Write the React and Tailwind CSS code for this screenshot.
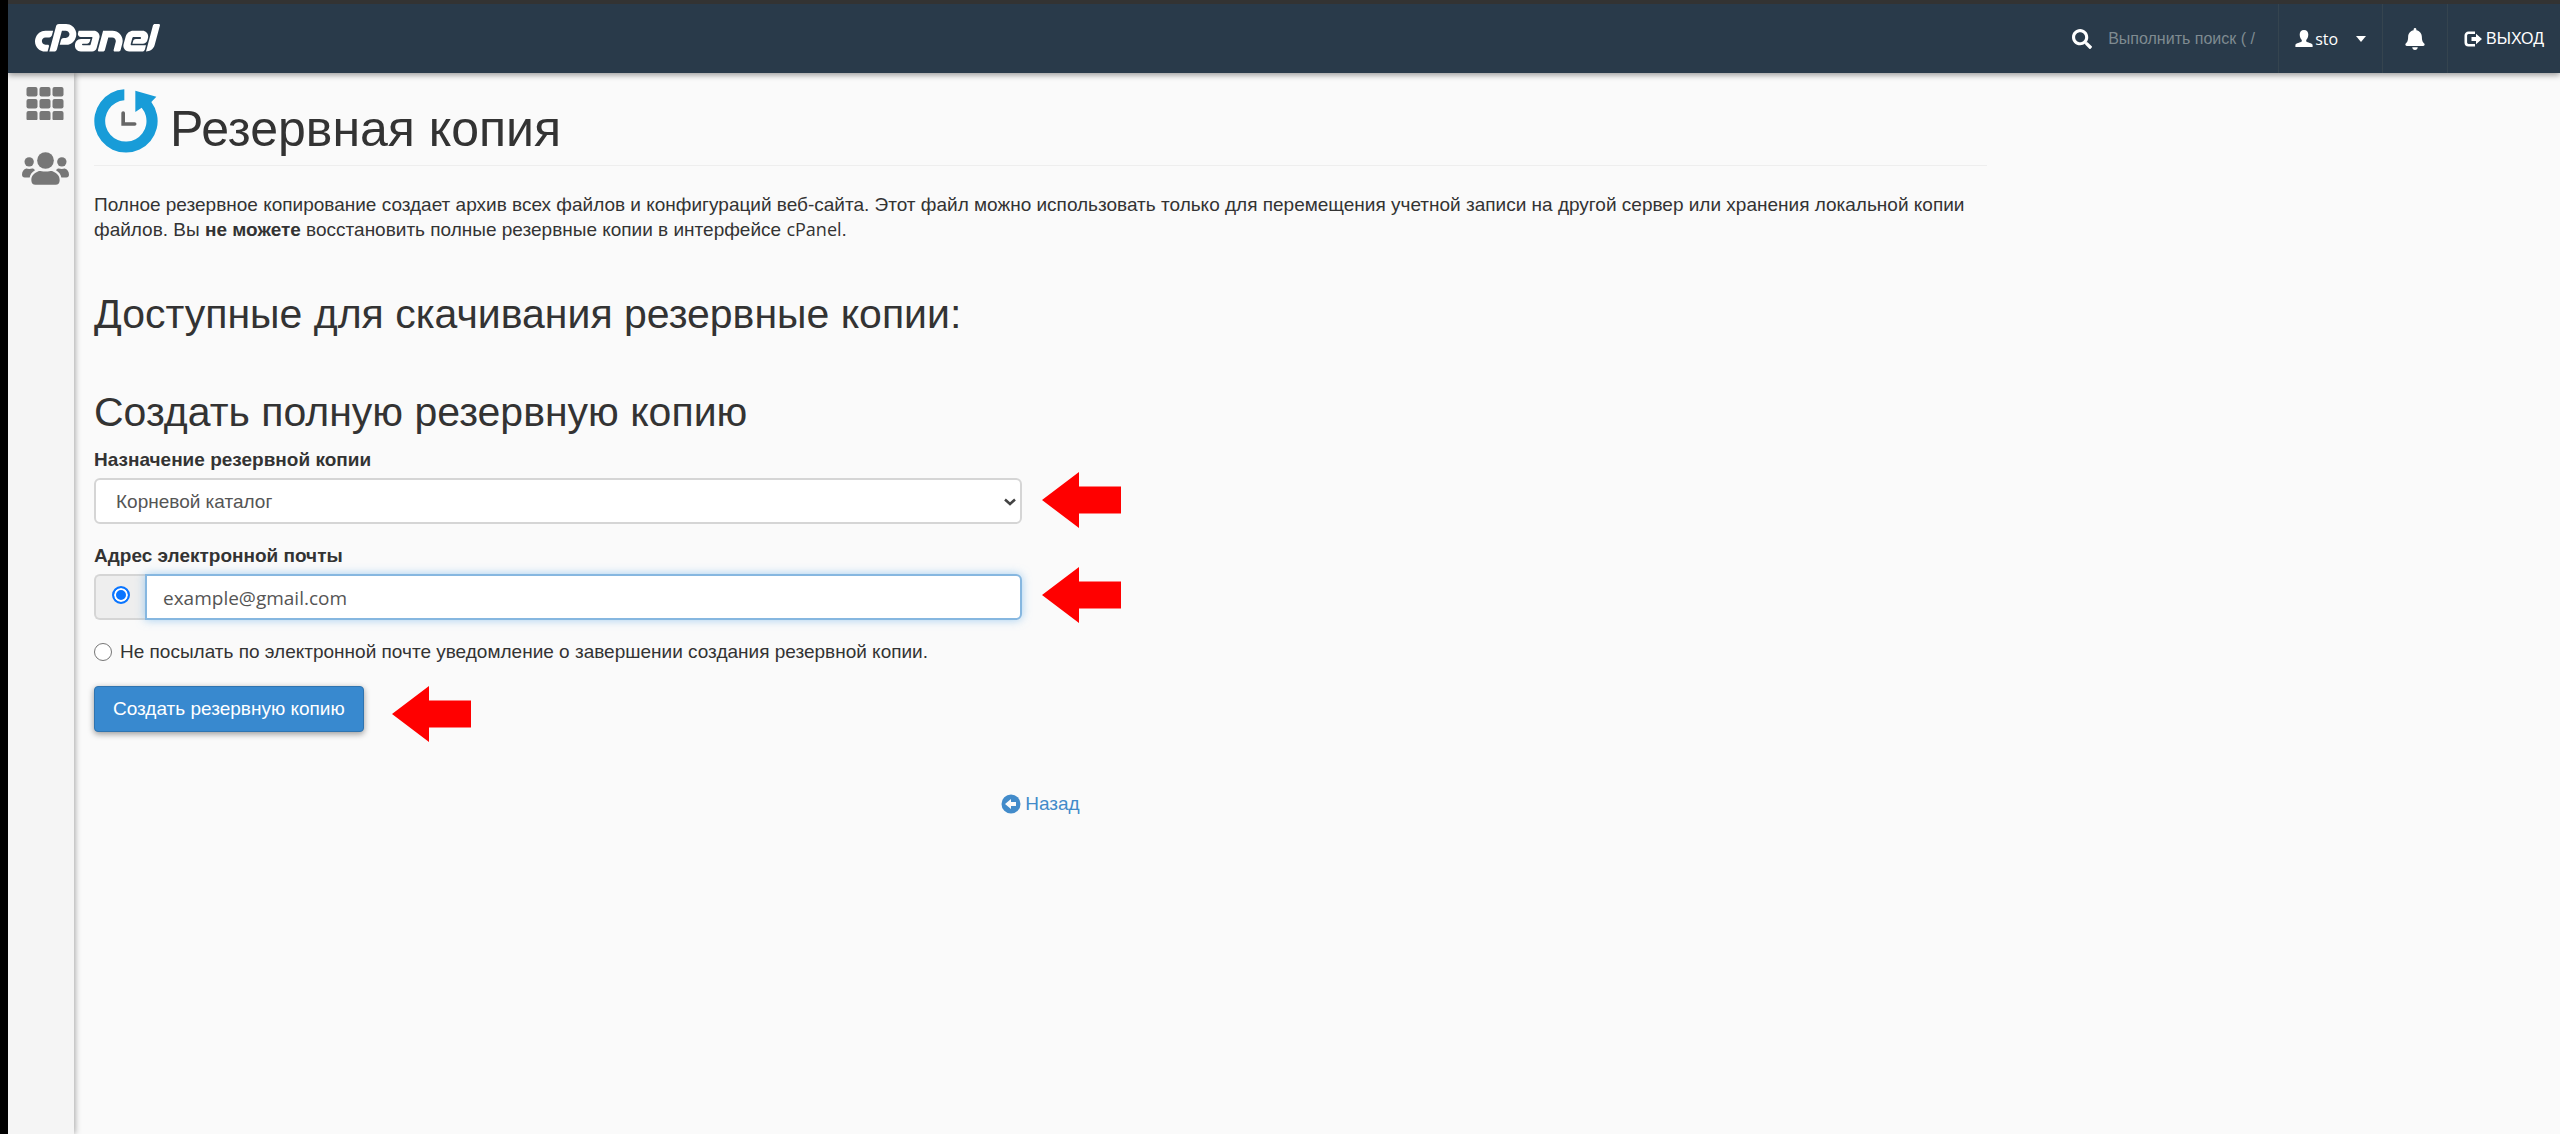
import { FaCpanel, FaSearch, FaBell } from "react-icons/fa";

function GridIcon() {
  const cells = [0, 13, 26];
  return (
    <svg viewBox="0 0 37 33" className="h-[33px] w-[38px]" fill="currentColor" aria-hidden="true">
      {cells.map((x) =>
        [0, 12, 24].map((y) => <rect key={`${x}-${y}`} x={x} y={y} width="11" height="9.5" rx="2" />)
      )}
    </svg>
  );
}

function UsersIcon() {
  return (
    <svg viewBox="0 0 141 98" className="h-[33px] w-[47px]" fill="currentColor" aria-hidden="true">
      <circle cx="70.500" cy="25" r="25" />
      <circle cx="21.500" cy="29" r="14" />
      <circle cx="119.500" cy="29" r="14" />
      <path d="M48 58c6-3 7 0 22.500 0S87 55 93 58c13 5 20 14 20 26 0 9-5 14-12 14H40c-7 0-12-5-12-14 0-12 7-21 20-26z" />
      <path d="M13 49c5 2 12 2 18 0 3 0 6 2 8 5-9 5-14 12-16 22H8c-5 0-8-3-8-8 0-10 5-17 13-19z" />
      <path d="M128 49c-5 2-12 2-18 0-3 0-6 2-8 5 9 5 14 12 16 22h15c5 0 8-3 8-8 0-10-5-17-13-19z" />
    </svg>
  );
}

function UserIcon() {
  return (
    <svg viewBox="0 0 18 17" className="h-[17px] w-[18px]" fill="currentColor" aria-hidden="true">
      <path d="M9 0c2.800 0 4.300 1.900 4.300 4.500 0 2.300-.9 4.300-2.100 5.500v1.400c1.200.9 6.100 1.700 6.400 3.500V17H.4v-2.100c.3-1.800 5.200-2.600 6.400-3.500V10C5.600 8.800 4.700 6.800 4.700 4.500 4.700 1.900 6.200 0 9 0z" />
    </svg>
  );
}

function LogOutIcon() {
  return (
    <svg viewBox="0 0 18 16" className="h-4 w-[18px]" aria-hidden="true">
      <path d="M11 1.800H4.500a2.700 2.700 0 0 0-2.700 2.700v7a2.700 2.700 0 0 0 2.700 2.700H11" fill="none" stroke="currentColor" strokeWidth="2.600" />
      <path d="M12 2.800 18 8l-6 5.200v-3.200H7.500V6H12z" fill="currentColor" />
    </svg>
  );
}

function BackupIcon() {
  return (
    <svg viewBox="0 0 192 192" className="h-16 w-16" aria-hidden="true">
      <path d="M91 1A95 95 0 1 0 172 39L187 23 124 5v64l19-13A62 62 0 1 1 91 34z" fill="#189cd8" />
      <path d="M87.500 72v33H122" fill="none" stroke="#666666" strokeWidth="11" strokeLinecap="round" />
    </svg>
  );
}

function BackIcon() {
  return (
    <svg viewBox="0 0 20 20" className="h-5 w-5" aria-hidden="true">
      <circle cx="10" cy="10" r="9.500" fill="currentColor" />
      <path d="M4 10l6-5v3h5v4h-5v3z" fill="#fafafa" />
    </svg>
  );
}

function RedArrow() {
  return (
    <svg viewBox="0 0 79 56" className="h-14 w-[79px] shrink-0" aria-hidden="true">
      <path d="M0 28 37 0v14.500h42v27H37V56z" fill="#ff0000" />
    </svg>
  );
}

const radio =
  "h-[18px] w-[18px] shrink-0 appearance-none rounded-full border border-[#767676] bg-white checked:border-2 checked:border-[#0a75ff] checked:bg-[#0a75ff] checked:shadow-[inset_0_0_0_2px_white]";

export default function App() {
  return (
    <div className="flex min-h-screen flex-col border-l-8 border-black bg-[#fafafa] font-['Open_Sans','Liberation_Sans',sans-serif] text-[19px] text-[#333333]">
      <header className="relative z-10 flex h-[73px] items-stretch border-t-4 border-[#333333] bg-[#293a4a] text-white shadow-[0_2px_6px_rgba(0,0,0,0.4)]">
        <a href="#home" aria-label="cPanel" className="flex items-center pl-[27px]">
          <FaCpanel className="h-[100px] w-[125px]" />
        </a>
        <div className="ml-auto flex font-['Liberation_Sans',sans-serif] text-base">
          <div className="flex items-center gap-4 pr-[18px]">
            <FaSearch className="size-5" />
            <input
              type="text"
              aria-label="Выполнить поиск"
              placeholder="Выполнить поиск ( /"
              className="w-[152px] bg-transparent placeholder:text-[#7f8b91] focus:outline-none"
            />
          </div>
          <button type="button" className="flex items-center gap-0.5 border-l border-[#35444f] px-4 font-['Open_Sans',sans-serif]">
            <UserIcon />
            sto
            <svg viewBox="0 0 10 6" className="ml-4 h-[6px] w-[10px]" fill="currentColor" aria-hidden="true">
              <path d="M0 0h10L5 6z" />
            </svg>
          </button>
          <button type="button" aria-label="Уведомления" className="flex items-center border-l border-[#35444f] px-[22px]">
            <FaBell className="h-[22px] w-5" />
          </button>
          <a href="#logout" className="flex items-center gap-1 border-l border-[#35444f] px-4">
            <LogOutIcon />
            ВЫХОД
          </a>
        </div>
      </header>

      <div className="flex grow">
        <nav className="flex w-[66px] shrink-0 flex-col items-center gap-8 bg-[#f5f5f5] pt-[14px] pl-2 text-[#777777] shadow-[1px_0_6px_rgba(0,0,0,0.35)]">
          <a href="#tools" aria-label="Инструменты">
            <GridIcon />
          </a>
          <a href="#users" aria-label="Пользователи">
            <UsersIcon />
          </a>
        </nav>

        <main className="max-w-[1913px] grow pl-5 font-['Liberation_Sans',sans-serif]">
          <h1 className="flex items-end gap-3 border-b border-[#eeeeee] pt-4 pb-3 text-[50px] leading-12">
            <BackupIcon />
            Резервная копия
          </h1>

          <p className="mt-[26px] leading-[25px]">
            Полное резервное копирование создает архив всех файлов и конфигураций веб-сайта. Этот файл можно
            использовать только для перемещения учетной записи на другой сервер или хранения локальной копии файлов.
            Вы <strong>не можете</strong> восстановить полные резервные копии в интерфейсе{" "}
            <span className="font-['Open_Sans',sans-serif] text-lg leading-6">cPanel</span>.
          </p>

          <h2 className="mt-12 text-[41px] leading-12">Доступные для скачивания резервные копии:</h2>
          <h2 className="mt-[50px] text-[41px] leading-12">Создать полную резервную копию</h2>

          <form onSubmit={(e) => e.preventDefault()}>
            <label htmlFor="destination" className="mt-3 block leading-6 font-bold">
              Назначение резервной копии
            </label>
            <div className="mt-1.5 flex h-[46px] items-center">
              <div className="relative w-[49%]">
                <select
                  id="destination"
                  className="h-[46px] w-full appearance-none rounded-md border-2 border-[#d5d5d5] bg-white pt-0.5 pl-5 text-[#555555]"
                >
                  <option>Корневой каталог</option>
                </select>
                <svg viewBox="0 0 12 8" className="pointer-events-none absolute top-5 right-[6px] h-2 w-3" aria-hidden="true">
                  <path d="M1 1.500 6 6l5-4.500" fill="none" stroke="#444444" strokeWidth="2.500" />
                </svg>
              </div>
              <div className="ml-5 pb-0.5">
                <RedArrow />
              </div>
            </div>

            <label htmlFor="email" className="mt-5 block leading-6 font-bold">
              Адрес электронной почты
            </label>
            <div className="mt-1.5 flex h-[46px] items-center">
              <div className="flex h-[46px] w-[49%]">
                <span className="flex w-[51px] items-center justify-center rounded-l-md border-2 border-r-0 border-[#d5d5d5] bg-[#eeeeee] pb-1">
                  <input type="radio" name="notify" defaultChecked aria-label="Отправить уведомление" className={radio} />
                </span>
                <input
                  id="email"
                  type="text"
                  defaultValue="example@gmail.com"
                  className="min-w-0 grow rounded-r-md border-2 border-[#86b7e0] bg-white px-4 pt-0.5 font-['Open_Sans',sans-serif] text-[19px] text-[#555555] shadow-[0_0_10px_rgba(102,175,233,0.6)] focus:outline-none"
                />
              </div>
              <div className="ml-5 pb-1">
                <RedArrow />
              </div>
            </div>

            <label className="mt-5 flex items-center gap-2 leading-6">
              <input type="radio" name="notify" className={radio} />
              Не посылать по электронной почте уведомление о завершении создания резервной копии.
            </label>

            <div className="mt-[22px] flex items-start">
              <button
                type="submit"
                className="h-[46px] rounded-sm border border-[#2f74b0] bg-[#3889cf] px-[18px] text-white shadow-[0_2px_6px_rgba(0,0,0,0.4)]"
              >
                Создать резервную копию
              </button>
              <div className="ml-7">
                <RedArrow />
              </div>
            </div>
          </form>

          <div className="mt-12 flex justify-center">
            <a href="#back" className="flex items-center gap-1 text-[#428bca]">
              <BackIcon />
              Назад
            </a>
          </div>
        </main>
      </div>
    </div>
  );
}
